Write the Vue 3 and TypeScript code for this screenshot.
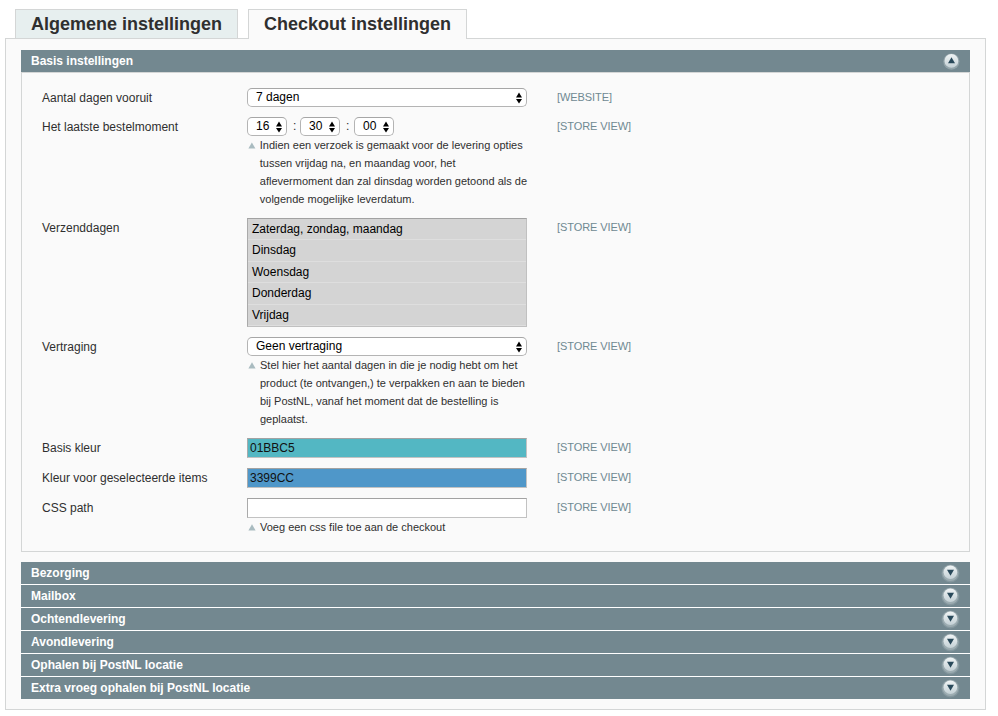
<script setup lang="ts">
import { ref } from 'vue'

interface Row {
  label: string
  scope: string
  kind: 'select' | 'time' | 'list' | 'input'
  values: string[]
  color?: string
  hint?: string[]
}

const rows: Row[] = [
  { label: 'Aantal dagen vooruit', scope: '[WEBSITE]', kind: 'select', values: ['7 dagen'] },
  {
    label: 'Het laatste bestelmoment',
    scope: '[STORE VIEW]',
    kind: 'time',
    values: ['16', '30', '00'],
    hint: [
      'Indien een verzoek is gemaakt voor de levering opties',
      'tussen vrijdag na, en maandag voor, het',
      'aflevermoment dan zal dinsdag worden getoond als de',
      'volgende mogelijke leverdatum.',
    ],
  },
  {
    label: 'Verzenddagen',
    scope: '[STORE VIEW]',
    kind: 'list',
    values: ['Zaterdag, zondag, maandag', 'Dinsdag', 'Woensdag', 'Donderdag', 'Vrijdag'],
  },
  {
    label: 'Vertraging',
    scope: '[STORE VIEW]',
    kind: 'select',
    values: ['Geen vertraging'],
    hint: [
      'Stel hier het aantal dagen in die je nodig hebt om het',
      'product (te ontvangen,) te verpakken en aan te bieden',
      'bij PostNL, vanaf het moment dat de bestelling is',
      'geplaatst.',
    ],
  },
  { label: 'Basis kleur', scope: '[STORE VIEW]', kind: 'input', values: ['01BBC5'], color: '#53b7c3' },
  { label: 'Kleur voor geselecteerde items', scope: '[STORE VIEW]', kind: 'input', values: ['3399CC'], color: '#4f97c9' },
  {
    label: 'CSS path',
    scope: '[STORE VIEW]',
    kind: 'input',
    values: [''],
    color: '#ffffff',
    hint: ['Voeg een css file toe aan de checkout'],
  },
]

const tabs = ['Algemene instellingen', 'Checkout instellingen']
const activeTab = ref(1)
const sections = [
  'Bezorging',
  'Mailbox',
  'Ochtendlevering',
  'Avondlevering',
  'Ophalen bij PostNL locatie',
  'Extra vroeg ophalen bij PostNL locatie',
]
</script>

<template>
  <div class="page">
    <nav class="tabs">
      <div v-for="(t, i) in tabs" :key="t" class="tab" :class="{ active: i === activeTab }" @click="activeTab = i">
        <span>{{ t }}</span>
      </div>
    </nav>
    <main class="panel">
      <div class="bar open">
        <span>Basis instellingen</span>
        <svg class="toggle" width="20" height="20" viewBox="0 0 20 20">
          <defs>
            <linearGradient id="knob" x1="0" y1="0" x2="0" y2="1">
              <stop offset="0" stop-color="#f0f4f5" />
              <stop offset="1" stop-color="#c3d0d5" />
            </linearGradient>
          </defs>
          <circle cx="10.4" cy="10.6" r="8.1" fill="#93a4aa" />
          <circle cx="10.4" cy="9.9" r="6.9" fill="url(#knob)" />
          <path d="M10.5 6.2L14 12.2H7Z" fill="#29495a" />
        </svg>
      </div>
      <section class="fieldset">
        <div v-for="r in rows" :key="r.label" class="row">
          <label class="label">{{ r.label }}</label>
          <div class="value">
            <div v-if="r.kind === 'select' || r.kind === 'time'" class="controls">
              <template v-for="(v, i) in r.values" :key="i">
                <span v-if="i > 0" class="colon" :class="{ wide: i > 1 }">:</span>
                <div class="select" :class="{ small: r.kind === 'time' }">
                  <span>{{ v }}</span>
                  <svg width="6" height="12" viewBox="0 0 6 12">
                    <path d="M3 .6L6 5.5H0ZM3 11.6L6 6.9H0Z" fill="#000" />
                  </svg>
                </div>
              </template>
            </div>
            <div v-else-if="r.kind === 'list'" class="list">
              <div v-for="v in r.values" :key="v" class="option">{{ v }}</div>
            </div>
            <div v-else class="input" :style="{ backgroundColor: r.color }">{{ r.values[0] }}</div>
            <div v-if="r.hint" class="hint">
              <svg width="8" height="7" viewBox="0 0 8 7"><path d="M4 .3L7.6 6.6H.4Z" fill="#a9bbc0" /></svg>
              <div>
                <div v-for="h in r.hint" :key="h" class="line">{{ h }}</div>
              </div>
            </div>
          </div>
          <span class="scope">{{ r.scope }}</span>
        </div>
      </section>
      <div class="sections">
        <div v-for="s in sections" :key="s" class="bar">
          <span>{{ s }}</span>
          <svg class="toggle" width="20" height="20" viewBox="0 0 20 20">
            <circle cx="9.4" cy="10.4" r="9" fill="#84979e" />
            <circle cx="9.4" cy="10.1" r="8" fill="#9dadb2" />
            <circle cx="9.4" cy="9.3" r="6.8" fill="url(#knob)" />
            <path d="M6 6.7H13L9.5 12.7Z" fill="#29495a" />
          </svg>
        </div>
      </div>
    </main>
  </div>
</template>

<style>
body {
  margin: 0;
  background: #fff;
}
</style>

<style scoped>
.page {
  box-sizing: border-box;
  width: 998px;
  height: 716px;
  padding: 9px 12px 0 5px;
  overflow: hidden;
  font: 12px/18px 'Liberation Sans', Arial, sans-serif;
  color: #2f2f2f;
  white-space: nowrap;
}
.tabs {
  display: flex;
  gap: 10px;
  padding-left: 10px;
  position: relative;
  z-index: 1;
}
.tab {
  box-sizing: border-box;
  width: 223px;
  height: 29px;
  padding-left: 15px;
  border: 1px solid #d4d6d6;
  border-bottom: 0;
  background: #e7efef;
  font-size: 18px;
  font-weight: bold;
  line-height: 28px;
}
.tab.active {
  width: 219px;
  height: 30px;
  margin-bottom: -1px;
  background: #fafafa;
}
.panel {
  box-sizing: border-box;
  width: 981px;
  height: 672px;
  padding: 11px 15px 0;
  border: 1px solid #d4d6d6;
  background: #fafafa;
}
.bar {
  box-sizing: border-box;
  display: flex;
  justify-content: space-between;
  align-items: flex-start;
  height: 22px;
  padding: 0 9px 0 10px;
  background: #738890;
  color: #fff;
  font-weight: bold;
  line-height: 22px;
}
.toggle {
  margin-top: 1px;
}
.fieldset {
  box-sizing: border-box;
  display: flex;
  flex-direction: column;
  gap: 10px;
  height: 480px;
  padding: 15px 20px 0;
  border: 1px solid #d4d6d6;
}
.row {
  display: grid;
  grid-template-columns: 205px 280px 1fr;
  align-items: start;
}
.label {
  padding-top: 1px;
}
.scope {
  padding-left: 30px;
  font-size: 11px;
  letter-spacing: -0.08px;
  color: #6f8992;
}
.controls {
  display: flex;
  height: 19px;
}
.select {
  box-sizing: border-box;
  display: flex;
  justify-content: space-between;
  align-items: center;
  width: 280px;
  height: 19px;
  padding: 0 4px 0 8px;
  border: 1px solid #b4b4b4;
  border-top-color: #a6a6a6;
  border-radius: 5px;
  background: #fff;
  color: #000;
  line-height: 17px;
}
.select.small {
  width: 40px;
}
.colon {
  box-sizing: border-box;
  width: 13px;
  padding-left: 6px;
}
.colon.wide {
  width: 14px;
}
.list {
  box-sizing: border-box;
  height: 109px;
  border: 1px solid #c0c0c0;
  border-top-color: #a2a2a2;
  border-left-color: #aaa;
  background: #d4d4d4;
}
.option {
  box-sizing: border-box;
  height: 21.4px;
  padding-left: 4px;
  border-bottom: 1px solid #dedede;
  color: #000;
  line-height: 20px;
}
.input {
  box-sizing: border-box;
  height: 20px;
  padding-left: 2px;
  border: 1px solid #c2c2c2;
  border-top-color: #a2a2a2;
  border-left-color: #aaa;
  color: #111;
  line-height: 18px;
}
.hint {
  display: flex;
  align-items: flex-start;
  gap: 4px;
  padding-left: 1px;
  font-size: 11px;
}
.hint svg {
  margin-top: 6px;
}
.sections {
  display: flex;
  flex-direction: column;
  gap: 1px;
  margin-top: 10px;
  background: #fff;
}
</style>
